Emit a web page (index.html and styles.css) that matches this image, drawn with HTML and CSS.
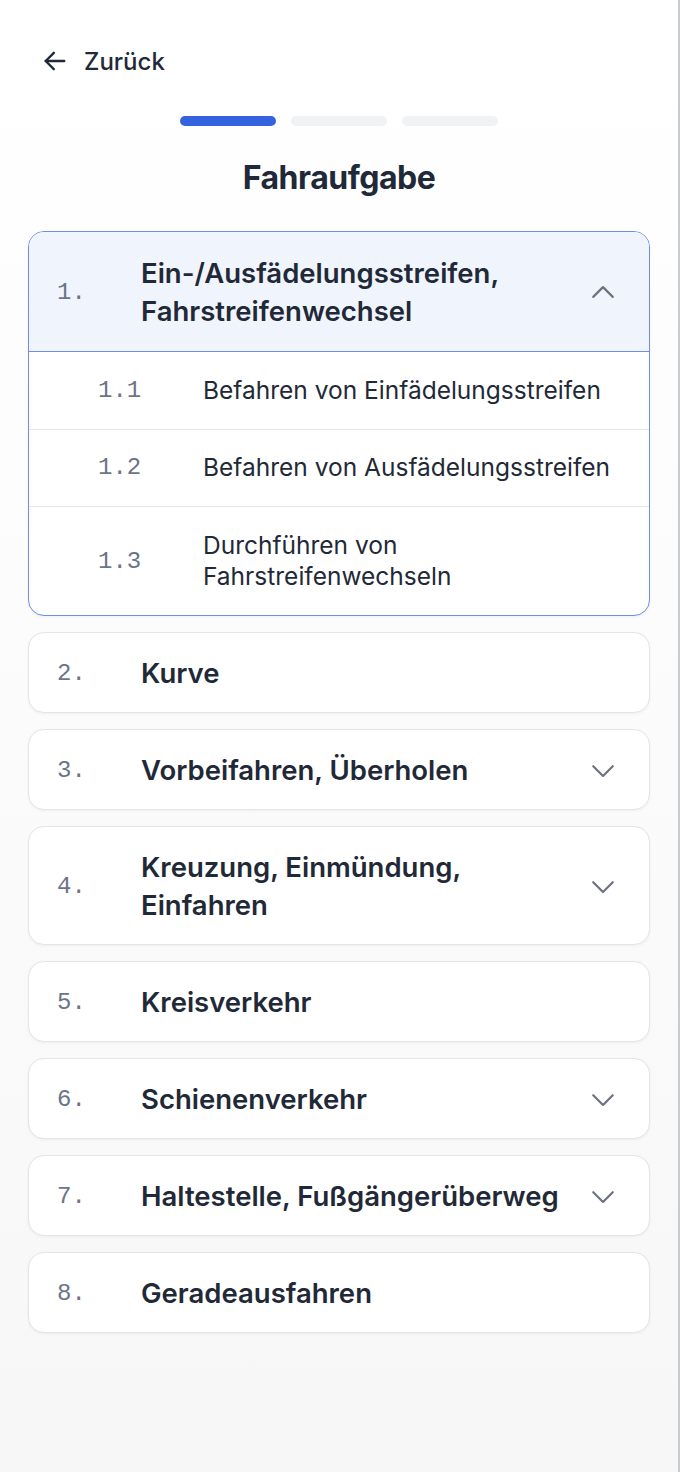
FILE: index.html
```html
<!DOCTYPE html>
<html lang="de">
<head>
<meta charset="utf-8">
<title>Fahraufgabe</title>
<link rel="stylesheet" href="styles.css">
</head>
<body>
<div class="page">
  <header class="topbar">
    <button class="back">
      <svg class="back-icon" width="28" height="28" viewBox="0 0 24 24" fill="none" stroke="currentColor" stroke-width="2" stroke-linecap="round" stroke-linejoin="round"><path d="M20 12H4"/><path d="M11 5l-7 7 7 7"/></svg>
      <span>Zurück</span>
    </button>
  </header>

  <div class="progress">
    <span class="seg active"></span>
    <span class="seg"></span>
    <span class="seg"></span>
  </div>

  <h1 class="title">Fahraufgabe</h1>

  <div class="list">
    <section class="card open">
      <div class="card-head">
        <span class="num">1.</span>
        <span class="label">Ein-/Ausfädelungsstreifen, Fahrstreifenwechsel</span>
        <svg class="chev" width="26" height="26" viewBox="0 0 24 24" fill="none" stroke="currentColor" stroke-width="2" stroke-linecap="round" stroke-linejoin="round"><path d="M3 16.5l9-9 9 9"/></svg>
      </div>
      <div class="sub">
        <span class="sub-num">1.1</span>
        <span class="sub-label">Befahren von Einfädelungsstreifen</span>
      </div>
      <div class="sub">
        <span class="sub-num">1.2</span>
        <span class="sub-label">Befahren von Ausfädelungsstreifen</span>
      </div>
      <div class="sub">
        <span class="sub-num">1.3</span>
        <span class="sub-label">Durchführen von<br>Fahrstreifenwechseln</span>
      </div>
    </section>

    <section class="card">
      <div class="card-head">
        <span class="num">2.</span>
        <span class="label">Kurve</span>
      </div>
    </section>

    <section class="card">
      <div class="card-head">
        <span class="num">3.</span>
        <span class="label">Vorbeifahren, Überholen</span>
        <svg class="chev" width="26" height="26" viewBox="0 0 24 24" fill="none" stroke="currentColor" stroke-width="2" stroke-linecap="round" stroke-linejoin="round"><path d="M3 8.5l9 9 9-9"/></svg>
      </div>
    </section>

    <section class="card">
      <div class="card-head">
        <span class="num">4.</span>
        <span class="label">Kreuzung, Einmündung, Einfahren</span>
        <svg class="chev" width="26" height="26" viewBox="0 0 24 24" fill="none" stroke="currentColor" stroke-width="2" stroke-linecap="round" stroke-linejoin="round"><path d="M3 8.5l9 9 9-9"/></svg>
      </div>
    </section>

    <section class="card">
      <div class="card-head">
        <span class="num">5.</span>
        <span class="label">Kreisverkehr</span>
      </div>
    </section>

    <section class="card">
      <div class="card-head">
        <span class="num">6.</span>
        <span class="label">Schienenverkehr</span>
        <svg class="chev" width="26" height="26" viewBox="0 0 24 24" fill="none" stroke="currentColor" stroke-width="2" stroke-linecap="round" stroke-linejoin="round"><path d="M3 8.5l9 9 9-9"/></svg>
      </div>
    </section>

    <section class="card">
      <div class="card-head">
        <span class="num">7.</span>
        <span class="label">Haltestelle, Fußgängerüberweg</span>
        <svg class="chev" width="26" height="26" viewBox="0 0 24 24" fill="none" stroke="currentColor" stroke-width="2" stroke-linecap="round" stroke-linejoin="round"><path d="M3 8.5l9 9 9-9"/></svg>
      </div>
    </section>

    <section class="card">
      <div class="card-head">
        <span class="num">8.</span>
        <span class="label">Geradeausfahren</span>
      </div>
    </section>
  </div>
</div>
</body>
</html>
```

FILE: styles.css
```css
* { box-sizing: border-box; }

html, body {
  margin: 0;
  padding: 0;
}

body {
  width: 680px;
  min-height: 1472px;
  background: linear-gradient(#ffffff, #f7f7f8);
  font-family: Inter, "Noto Sans", sans-serif;
  color: #1f2937;
  border-right: 2px solid #c9cbcf;
}

.page {
  width: 678px;
  padding: 41px 28px 40px;
}

.topbar {
  height: 40px;
  display: flex;
  align-items: center;
}

.back {
  display: flex;
  align-items: center;
  gap: 15px;
  margin-left: 13px;
  padding: 0;
  border: 0;
  background: none;
  font: inherit;
  font-size: 24px;
  font-weight: 500;
  color: #1f2937;
}

.back-icon { display: block; }

.progress {
  display: flex;
  justify-content: center;
  gap: 15px;
  margin-top: 35px;
}

.seg {
  width: 96px;
  height: 10px;
  border-radius: 5px;
  background: #f1f2f4;
}

.seg.active { background: #3563e0; }

.title {
  margin: 32px 0 0;
  text-align: center;
  font-size: 32px;
  font-weight: 700;
  letter-spacing: -0.5px;
  line-height: 40px;
}

.list {
  display: flex;
  flex-direction: column;
  gap: 16px;
  margin-top: 33px;
}

.card {
  background: #fff;
  border: 1px solid #e4e5e9;
  border-radius: 16px;
  box-shadow: 0 1px 3px rgba(17, 24, 39, 0.05);
  overflow: hidden;
}

.card.open {
  border: 1.5px solid #6e8fe9;
}

.card-head {
  display: flex;
  align-items: center;
  padding: 21px 33px 20px 28px;
}

.card.open .card-head {
  padding-top: 22px;
  padding-bottom: 21px;
  background: #f0f4fd;
  border-bottom: 1.5px solid #6e8fe9;
}

.num {
  width: 84px;
  flex: none;
  font-family: "Liberation Mono", monospace;
  font-size: 24px;
  color: #6b7488;
}

.label {
  flex: 1;
  font-size: 27.5px;
  font-weight: 600;
  line-height: 38px;
  color: #1f2937;
}

.chev {
  flex: none;
  display: block;
  color: #6b7280;
  margin-left: 8px;
}

.sub {
  display: flex;
  align-items: center;
  padding: 22.5px 20px 22.5px 69px;
  border-top: 1px solid #e6e7ea;
}

.card-head + .sub { border-top: 0; }

.sub-num {
  width: 105px;
  flex: none;
  font-family: "Liberation Mono", monospace;
  font-size: 24px;
  color: #6b7488;
}

.sub-label {
  font-size: 24.5px;
  line-height: 31.5px;
  color: #1f2937;
}
```
